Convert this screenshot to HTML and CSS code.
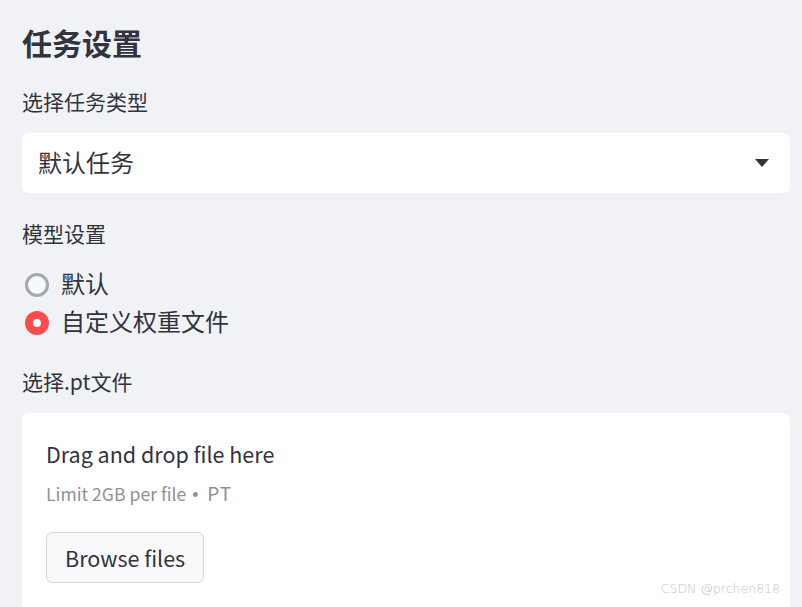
FILE: index.html
```html
<!DOCTYPE html>
<html lang="zh-CN">
<head>
    <meta charset="UTF-8">
    <meta name="viewport" content="width=device-width, initial-scale=1.0">
    <title>任务设置</title>
    <link rel="stylesheet" href="styles.css">
</head>
<body>
    <div class="sidebar">
        <h2 class="title">任务设置</h2>

        <div class="field">
            <label class="label">选择任务类型</label>
            <div class="select">
                <span class="select-value">默认任务</span>
                <svg class="caret" width="16" height="10" viewBox="0 0 16 10">
                    <path d="M1 1 L15 1 L8 9 Z" fill="#31333f"/>
                </svg>
            </div>
        </div>

        <div class="field field-radio">
            <label class="label">模型设置</label>
            <div class="radio-group">
                <div class="radio">
                    <span class="radio-dot"></span>
                    <span class="radio-text">默认</span>
                </div>
                <div class="radio checked">
                    <span class="radio-dot"></span>
                    <span class="radio-text">自定义权重文件</span>
                </div>
            </div>
        </div>

        <div class="field field-upload">
            <label class="label">选择.pt文件</label>
            <div class="dropzone">
                <div class="drop-title">Drag and drop file here</div>
                <div class="drop-limit">Limit 2GB per file <span class="dot">•</span> <span class="ext">PT</span></div>
                <button class="btn">Browse files</button>
                <span class="watermark">CSDN @prchen818</span>
            </div>
        </div>
    </div>
</body>
</html>
```

FILE: styles.css
```css
body {
    margin: 0;
    padding: 0;
    background-color: #f0f2f6;
    color: #31333f;
    font-family: "Noto Sans CJK SC", "Noto Sans", sans-serif;
    overflow: hidden;
}
.sidebar {
    padding: 22px 12px 0 22px;
}
.title {
    margin: 0;
    font-size: 30px;
    font-weight: 700;
    line-height: 40px;
}
.field {
    margin-top: 24px;
}
.field-radio {
    margin-top: 25px;
}
.field-upload {
    margin-top: 24px;
}
.label {
    display: block;
    font-size: 21px;
    line-height: 30px;
    margin-bottom: 17px;
}
.field-radio .label {
    margin-bottom: 18px;
}
.select {
    height: 60px;
    background-color: #ffffff;
    border-radius: 7px;
    display: flex;
    align-items: center;
    justify-content: space-between;
    padding: 0 20px 0 16px;
}
.select-value {
    font-size: 24px;
    padding-bottom: 4px;
}
.caret {
    display: block;
}
.radio {
    display: flex;
    align-items: center;
    height: 38px;
}
.radio-dot {
    box-sizing: border-box;
    width: 24px;
    height: 24px;
    border-radius: 50%;
    border: 3px solid #a3a8b4;
    background-color: #f7f8fa;
    margin-left: 3px;
    margin-right: 12px;
}
.radio.checked .radio-dot {
    border: 8px solid #ff4b4b;
    background-color: #ffffff;
}
.radio-text {
    font-size: 24px;
    padding-bottom: 5px;
}
.dropzone {
    position: relative;
    background-color: #ffffff;
    border-radius: 7px 7px 0 0;
    padding: 26px 24px 40px;
}
.drop-title {
    font-size: 21.5px;
    line-height: 30px;
}
.drop-limit {
    margin-top: 10px;
    height: 30px;
    font-size: 17.6px;
    line-height: 30px;
    color: #8e9099;
}
.drop-limit .dot {
    font-family: "Liberation Sans", sans-serif;
    margin: 0 5px 0 2px;
}
.drop-limit .ext {
    font-size: 19px;
    line-height: 1;
    letter-spacing: 1px;
}
.btn {
    margin-top: 23px;
    height: 51px;
    padding: 0 18px;
    font-family: inherit;
    font-size: 21.5px;
    color: #31333f;
    background-color: #f9f9fb;
    border: 1px solid #d5d6da;
    border-radius: 6px;
}
.watermark {
    position: absolute;
    right: 10px;
    top: 168px;
    font-family: "DejaVu Sans", sans-serif;
    font-size: 12.5px;
    color: #c4c4c8;
    font-weight: 300;
}
```
